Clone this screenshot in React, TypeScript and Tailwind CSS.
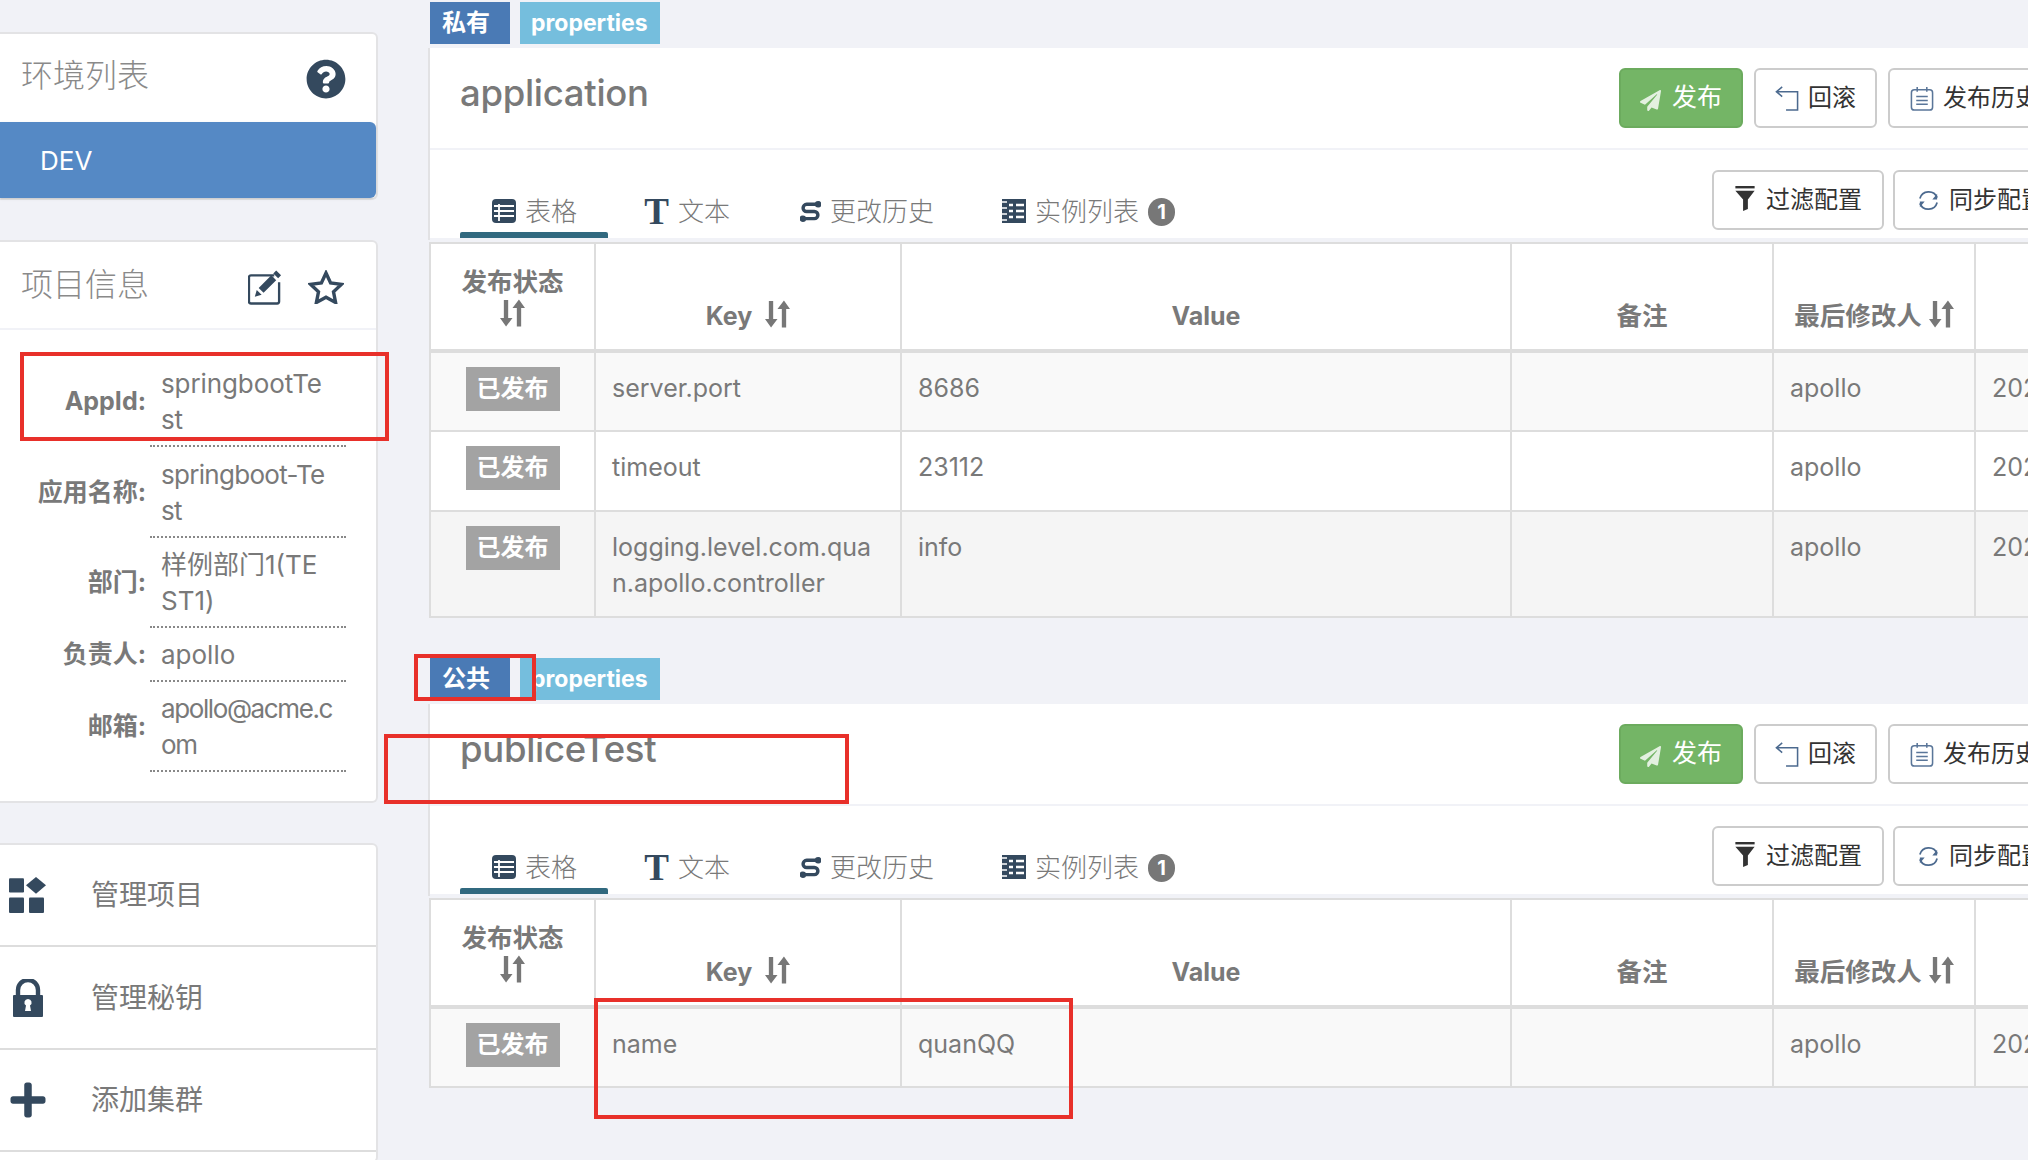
import React from "react";
import { FaQuestionCircle, FaPlus, FaPaperPlane } from "react-icons/fa";

const font = { fontFamily: '"Inter","Noto Sans CJK SC",sans-serif' };

function SortIcon({ className = "" }: { className?: string }) {
  return (
    <svg viewBox="0 0 26 28" preserveAspectRatio="none" className={`w-[25px] h-[28px] shrink-0 ${className}`} fill="#777">
      <path d="M4 1h4.5v18H13l-6.7 8.5L0 19h4z" />
      <path d="M17.5 27.5H22V9h4L19.7 0.5 13 9h4.5z" />
    </svg>
  );
}

function TableIcon() {
  return (
    <svg viewBox="0 0 24 24" className="w-6 h-6"><rect x="0" y="0" width="24" height="24" rx="4" fill="#34495e" />
      <path d="M2 7h20M2 12h20M2 17h20M7 5v17" stroke="#fff" strokeWidth="1.8" /></svg>
  );
}
function SwapIcon() {
  return (
    <svg viewBox="0 0 22 24" className="w-[21px] h-6" fill="none" stroke="#34495e" strokeWidth="3.6">
      <path d="M19 5H7a3.5 3.5 0 0 0 0 7.5h8a3.5 3.5 0 0 1 0 7.5H3" />
      <circle cx="19" cy="5" r="1.6" fill="#34495e" />
      <circle cx="3" cy="20" r="1.6" fill="#34495e" />
    </svg>
  );
}
function ServerIcon() {
  return (
    <svg viewBox="0 0 24 24" className="w-6 h-6"><rect width="24" height="24" fill="#34495e" />
      <path d="M3 0v24" stroke="#34495e" />
      <path d="M7 6h4M14 6h8M7 12h4M14 12h8M7 18h4M14 18h8" stroke="#fff" strokeWidth="2.4" />
      <path d="M0 3h5M0 9h5M0 15h5M0 21h5" stroke="#fff" strokeWidth="1.6" />
    </svg>
  );
}
function GridIcon() {
  return (
    <svg viewBox="0 0 38 28" className="w-[38px] h-[36px]" fill="#34495e" preserveAspectRatio="none">
      <rect x="0" y="1" width="15" height="11" rx="1" />
      <rect x="0" y="16" width="15" height="12" rx="1" />
      <rect x="20" y="16" width="15" height="12" rx="1" />
      <path d="M27 0l10 6.5-10 6.5-10-6.5z" />
    </svg>
  );
}
function LockIcon() {
  return (
    <svg viewBox="0 0 30 38" className="w-[30px] h-[38px]">
      <path d="M5 16V11a10 10 0 0 1 20 0v5" fill="none" stroke="#34495e" strokeWidth="4.4" />
      <path d="M1 16h28a1 1 0 0 1 1 1v20a1 1 0 0 1-1 1H1a1 1 0 0 1-1-1V17a1 1 0 0 1 1-1z" fill="#34495e" />
      <path d="M15 20a3.6 3.6 0 0 1 2 6.6l1 5.4h-6l1-5.4A3.6 3.6 0 0 1 15 20z" fill="#fff" />
    </svg>
  );
}
function EditIcon() {
  return (
    <svg viewBox="0 0 36 36" className="w-[35px] h-[36px] mr-[25px] mt-1">
      <path d="M27 6H3a2 2 0 0 0-2 2v25a2 2 0 0 0 2 2h27a2 2 0 0 0 2-2V13" fill="none" stroke="#34495e" strokeWidth="2.4" />
      <path d="M29 1l5 5-3 3-5-5zM24 6l5 5-13 13-5-5zM9 21l5 5-7 2z" fill="#34495e" />
    </svg>
  );
}
function StarIcon() {
  return (
    <svg viewBox="0 0 36 34" className="w-[36px] h-[34px] mr-[32px] mt-1">
      <path d="M18 3l4.6 10 10.9 1.3-8 7.5 2.1 10.7L18 27.2 8.4 32.5l2.1-10.7-8-7.5L13.4 13z" fill="none" stroke="#34495e" strokeWidth="3.4" strokeLinejoin="miter" />
    </svg>
  );
}
function RollbackIcon() {
  return (
    <svg viewBox="0 0 24 26" className="w-6 h-[25px]" fill="none" stroke="#4c6a8f" strokeWidth="1.6">
      <path d="M7 1L1 6l6 5M1 6h22v19H11" />
    </svg>
  );
}
function HistoryIcon() {
  return (
    <svg viewBox="0 0 24 26" className="w-6 h-[25px]" fill="none" stroke="#5a7699" strokeWidth="1.6">
      <rect x="1" y="4" width="22" height="21" rx="3" />
      <path d="M7 1v5M17 1v5M6 11h12M6 15h12M6 19h12" />
    </svg>
  );
}
function FilterIcon() {
  return (
    <svg viewBox="0 0 20 26" className="w-5 h-[25px] -mt-[3px]" fill="#333">
      <rect x="0" y="0" width="20" height="2.5" />
      <path d="M0 5h20l-7 9v10l-5 2V14z" />
    </svg>
  );
}
function SyncIcon() {
  return (
    <svg viewBox="0 0 24 24" className="w-[23px] h-[23px]" fill="none" stroke="#4c6a8f" strokeWidth="1.8">
      <path d="M3 10A9.5 9.5 0 0 1 21 9" />
      <path d="M21 14A9.5 9.5 0 0 1 3 15" />
      <path d="M21 5v6h-5z" fill="#4c6a8f" stroke="none" />
      <path d="M3 19v-6h5z" fill="#4c6a8f" stroke="none" />
    </svg>
  );
}

function OutlineButton({ icon, label, className = "" }: { icon: React.ReactNode; label: string; className?: string }) {
  return (
    <button className={`h-[60px] border-2 border-[#ccc] rounded-md bg-white flex items-center text-[24px] text-[#333] ${className}`}>
      {icon}
      <span className="whitespace-nowrap">{label}</span>
    </button>
  );
}

function Section({ tag, title, rows }: {
  tag: string; title: string;
  rows: { key: React.ReactNode; value: string; bg: string; h: string }[];
}) {
  return (
    <section className="w-[1672px]">
      <div className="flex gap-[10px] pl-[2px] h-[42px] text-[24px] font-bold text-white">
        <div className="w-[80px] bg-[#4a7ab5] flex items-center pl-[12px]">{tag}</div>
        <div className="w-[140px] bg-[#75bedd] flex items-center pl-[11px] text-[23px]">properties</div>
      </div>
      <div className="mt-1 bg-white border-l-2 border-[#e2e2e4]">
        <div className="h-[100px] flex items-start justify-between pl-[30px] pr-[32px] border-b-2 border-[#f1f2f7] box-content">
          <h2 className="text-[36.5px] font-medium text-[#797979] leading-[50px] tracking-[-0.3px] pt-[20px]">{title}</h2>
          <div className="flex gap-[11px] pt-[20px]">
            <button className="h-[60px] w-[124px] bg-[#74b566] border-2 border-[#6cab5e] rounded-md flex items-center justify-center gap-[11px] text-white text-[25px]">
              <FaPaperPlane className="w-[21px] h-[21px] text-white/80 mt-1" />
              <span>发布</span>
            </button>
            <OutlineButton className="w-[123px] justify-center gap-[9px]" icon={<RollbackIcon />} label="回滚" />
            <OutlineButton className="w-[180px] pl-[20px] gap-[9px]" icon={<HistoryIcon />} label="发布历史" />
          </div>
        </div>
        <div className="h-[88px] flex items-start justify-between pl-[30px] pr-[31px] relative">
          <div className="flex items-center text-[26px] text-[#797979] font-light pt-[38px] h-[84px] w-[800px]">
            <div className="absolute left-[30px] bottom-0 w-[148px] h-[6px] bg-[#31697f] rounded-t-[2px]" />
            <div className="flex items-center ml-[32px] gap-[9px]"><TableIcon /><span>表格</span></div>
            <div className="flex items-center ml-[67px] gap-[9px]">
              <span className="text-[37px] leading-none font-bold text-[#34495e] w-[25px] text-center" style={{ fontFamily: '"Liberation Serif",serif' }}>T</span>
              <span>文本</span>
            </div>
            <div className="flex items-center ml-[70px] gap-[9px]"><SwapIcon /><span>更改历史</span></div>
            <div className="flex items-center ml-[68px] gap-[9px]">
              <ServerIcon /><span>实例列表</span>
              <span className="w-[27px] h-[28px] rounded-full bg-[#777] text-white text-[20px] font-bold flex items-center justify-center mt-[2px]">1</span>
            </div>
          </div>
          <div className="flex gap-[9px] pt-[20px]">
            <OutlineButton className="w-[172px] pl-[21px] gap-[11px]" icon={<FilterIcon />} label="过滤配置" />
            <OutlineButton className="w-[176px] pl-[22px] gap-[9px]" icon={<SyncIcon />} label="同步配置" />
          </div>
        </div>
        <div className="h-[2px] bg-[#f1f2f7]" />
      </div>
      <div className="bg-[#f1f2f7] pt-[2px] pl-[1px]">
        <table className="table-fixed w-full border-collapse border-2 border-[#ddd] bg-white text-[25px] text-[#797979]">
          <colgroup>
            <col className="w-[165px]" /><col className="w-[306px]" /><col className="w-[610px]" />
            <col className="w-[262px]" /><col className="w-[202px]" /><col />
          </colgroup>
          <thead>
            <tr className="h-[108px] border-b-[4px] border-[#ddd]">
              <th className="border-r-2 border-[#ddd] align-bottom pb-[15px] leading-[36px] font-bold">
                <div className="text-[25.5px] -mt-[2px]">发布状态</div>
                <SortIcon className="block mx-auto mb-[7px] -mt-px" />
              </th>
              <th className="border-r-2 border-[#ddd] align-bottom pb-[15px] leading-[36px] font-bold text-[25px]">
                <div className="flex items-center justify-center"><span>Key</span><SortIcon className="ml-[13px] -mt-1" /></div>
              </th>
              <th className="border-r-2 border-[#ddd] align-bottom pb-[15px] leading-[36px] font-bold text-[25px]">Value</th>
              <th className="border-r-2 border-[#ddd] align-bottom pb-[15px] leading-[36px] font-bold text-[25.5px]">备注</th>
              <th className="border-r-2 border-[#ddd] align-bottom pb-[15px] leading-[36px] font-bold text-[25.5px] whitespace-nowrap">
                <div className="flex items-center justify-center"><span>最后修改人</span><SortIcon className="ml-[7px] -mt-1" /></div>
              </th>
              <th />
            </tr>
          </thead>
          <tbody>
            {rows.map((r, i) => (
              <tr key={i} className={`border-b-2 border-[#ddd] ${r.bg} ${r.h}`}>
                <td className="border-r-2 border-[#ddd] align-top pt-[14px] text-center">
                  <span className="inline-flex w-[94px] h-[44px] items-center justify-center bg-[#a3a3a3] text-white font-bold text-[24px]">已发布</span>
                </td>
                <td className="border-r-2 border-[#ddd] align-top pt-[17px] px-4 leading-[36px] whitespace-pre-line">{r.key}</td>
                <td className="border-r-2 border-[#ddd] align-top pt-[17px] px-4 leading-[36px]">{r.value}</td>
                <td className="border-r-2 border-[#ddd]" />
                <td className="border-r-2 border-[#ddd] align-top pt-[17px] px-4 leading-[36px]">apollo</td>
                <td className="align-top pt-[17px] px-4 leading-[36px] whitespace-nowrap">2021-01-01</td>
              </tr>
            ))}
          </tbody>
        </table>
      </div>
    </section>
  );
}

const info = [
  { label: "AppId:", value: "springbootTe\nst", h: "h-[90px]", cls: "tracking-[-0.1px]" },
  { label: "应用名称:", value: "springboot-Te\nst", h: "h-[91px]", cls: "tracking-[-0.7px]" },
  { label: "部门:", value: "样例部门1(TE\nST1)", h: "h-[90px]", cls: "tracking-[0px]" },
  { label: "负责人:", value: "apollo", h: "h-[54px]", cls: "tracking-[0px]" },
  { label: "邮箱:", value: "apollo@acme.c\nom", h: "h-[90px]", cls: "tracking-[-1.4px]" },
];

const menu = [
  { icon: <GridIcon />, label: "管理项目", cls: "pl-[9px] h-[100px]" },
  { icon: <LockIcon />, label: "管理秘钥", cls: "pl-[13px] h-[101px]" },
  { icon: <FaPlus className="w-[40px] h-[40px] text-[#34495e]" />, label: "添加集群", cls: "pl-[8px] h-[100px]" },
];

const panel = "bg-white border-2 border-l-0 border-[#e3e3e5] rounded-r-md";

export default function App() {
  return (
    <div className="w-[2028px] h-[1160px] overflow-hidden bg-[#f1f2f7] flex text-[#797979]" style={font}>
      <aside className="w-[378px] shrink-0 pt-[32px]">
        <div className={`${panel} h-[168px] flex flex-col`}>
          <div className="h-[84px] flex items-center justify-between pl-[21px] pr-[30px]">
            <span className="text-[32px] font-light text-[#8a8a8a]">环境列表</span>
            <FaQuestionCircle className="w-[40px] h-[40px] text-[#34495e] mt-[6px]" />
          </div>
          <div className="mt-1 h-[76px] bg-[#5589c5] rounded-r-md flex items-center pl-[40px] text-white text-[26px] shadow-sm">DEV</div>
        </div>
        <div className={`${panel} mt-[40px] h-[563px]`}>
          <div className="h-[86px] flex items-center pl-[21px] border-b-2 border-[#f1f2f7] box-content">
            <span className="text-[32px] font-light text-[#8a8a8a] flex-1">项目信息</span>
            <EditIcon />
            <StarIcon />
          </div>
          <div className="pt-[27px]">
            {info.map((r) => (
              <div key={r.label} className={`flex items-center ${r.h}`}>
                <div className="w-[149px] pr-[3px] text-right font-bold text-[25px] text-[#797979] whitespace-nowrap">{r.label}</div>
                <div className={`w-[196px] ml-px h-full flex items-center pl-[11px] pt-[2px] border-b-2 border-dotted border-[#888] text-[26px] leading-[36px] whitespace-pre-line ${r.cls}`}>{r.value}</div>
              </div>
            ))}
          </div>
        </div>
        <div className={`${panel} mt-[40px] h-[320px]`}>
          {menu.map((m) => (
            <div key={m.label} className={`box-content border-b-2 border-[#ddd] flex items-center ${m.cls}`}>
              {m.icon}
              <span className="absolute left-[91px] text-[28px] text-[#797979]">{m.label}</span>
            </div>
          ))}
        </div>
      </aside>
      <main className="ml-[50px] shrink-0 pt-[2px]">
        <Section tag="私有" title="application"
          rows={[
            { key: "server.port", value: "8686", bg: "bg-[#f9f9f9]", h: "h-[80px]" },
            { key: "timeout", value: "23112", bg: "bg-white", h: "h-[80px]" },
            { key: "logging.level.com.qua\nn.apollo.controller", value: "info", bg: "bg-[#f5f5f5]", h: "h-[106px]" },
          ]} />
        <div className="h-[40px]" />
        <Section tag="公共" title="publiceTest"
          rows={[{ key: "name", value: "quanQQ", bg: "bg-[#f9f9f9]", h: "h-[80px]" }]} />
      </main>
      <div className="absolute left-[20px] top-[352px] w-[369px] h-[89px] border-[4px] border-[#e8302a]" />
      <div className="absolute left-[414px] top-[654px] w-[122px] h-[47px] border-[4px] border-[#e8302a]" />
      <div className="absolute left-[384px] top-[734px] w-[465px] h-[70px] border-[4px] border-[#e8302a]" />
      <div className="absolute left-[594px] top-[998px] w-[479px] h-[121px] border-[4px] border-[#e8302a]" />
    </div>
  );
}
